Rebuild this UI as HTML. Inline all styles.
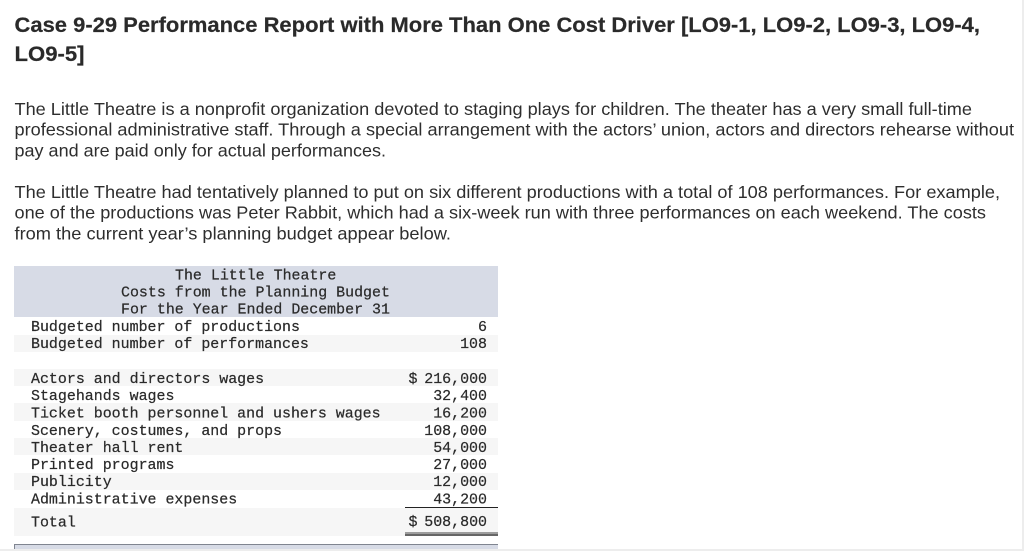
<!DOCTYPE html>
<html><head><meta charset="utf-8"><style>
html,body{margin:0;padding:0;background:#fff;width:1024px;height:553px;overflow:hidden}
svg{display:block}
.h{font:bold 21.5px "Liberation Sans",sans-serif;fill:#2a2a2a;stroke:#2a2a2a;stroke-width:.2}
.b{font:17.6px "Liberation Sans",sans-serif;fill:#2e2e2e}
.m{font:14.95px "Liberation Mono",monospace;fill:#2a2a2a;stroke:#2a2a2a;stroke-width:.22}
.r{text-anchor:end}
</style></head><body>
<svg width="1024" height="553" viewBox="0 0 1024 553" xmlns="http://www.w3.org/2000/svg">
<rect x="1022" y="0" width="2" height="551" fill="#ededed"/>
<rect x="0" y="549" width="1024" height="2" fill="#ededed"/>
<text class="h" x="14.5" y="32" textLength="965.5" lengthAdjust="spacingAndGlyphs">Case 9-29 Performance Report with More Than One Cost Driver [LO9-1, LO9-2, LO9-3, LO9-4,</text>
<text class="h" x="14.5" y="61" textLength="70" lengthAdjust="spacingAndGlyphs">LO9-5]</text>
<text class="b" x="14.5" y="115" textLength="957.5" lengthAdjust="spacingAndGlyphs">The Little Theatre is a nonprofit organization devoted to staging plays for children. The theater has a very small full-time</text>
<text class="b" x="14.5" y="135.6" textLength="999.5" lengthAdjust="spacingAndGlyphs">professional administrative staff. Through a special arrangement with the actors’ union, actors and directors rehearse without</text>
<text class="b" x="14.5" y="156.4" textLength="371.5" lengthAdjust="spacingAndGlyphs">pay and are paid only for actual performances.</text>
<text class="b" x="14.5" y="198" textLength="985.5" lengthAdjust="spacingAndGlyphs">The Little Theatre had tentatively planned to put on six different productions with a total of 108 performances. For example,</text>
<text class="b" x="14.5" y="218.6" textLength="971.5" lengthAdjust="spacingAndGlyphs">one of the productions was Peter Rabbit, which had a six-week run with three performances on each weekend. The costs</text>
<text class="b" x="14.5" y="239.4" textLength="436.5" lengthAdjust="spacingAndGlyphs">from the current year’s planning budget appear below.</text>

<rect x="14" y="266" width="484" height="51" fill="#d7dbe6"/>
<rect x="14" y="335" width="484" height="17" fill="#f6f6f6"/>
<rect x="14" y="369" width="484" height="17" fill="#f6f6f6"/>
<rect x="14" y="403" width="484" height="18" fill="#f6f6f6"/>
<rect x="14" y="438" width="484" height="17" fill="#f6f6f6"/>
<rect x="14" y="473" width="484" height="17" fill="#f6f6f6"/>
<rect x="14" y="508" width="484" height="28" fill="#f6f6f6"/>
<rect x="405" y="507" width="93" height="1" fill="#222"/>
<rect x="405" y="532.5" width="93" height="1" fill="#444"/>
<rect x="405" y="534" width="93" height="2" fill="#666"/>
<rect x="14" y="544" width="484" height="5" fill="#d7dbe6"/>
<rect x="14" y="544" width="484" height="1" fill="#808590"/>
<rect x="14" y="544" width="1" height="5" fill="#808590"/>

<text class="m" x="175" y="279.5">The Little Theatre</text>
<text class="m" x="121" y="296.5">Costs from the Planning Budget</text>
<text class="m" x="121" y="313.5">For the Year Ended December 31</text>
<text class="m" x="31" y="331">Budgeted number of productions</text>
<text class="m" x="31" y="348.2">Budgeted number of performances</text>
<text class="m" x="31" y="383">Actors and directors wages</text>
<text class="m" x="31" y="400">Stagehands wages</text>
<text class="m" x="31" y="417.4">Ticket booth personnel and ushers wages</text>
<text class="m" x="31" y="435">Scenery, costumes, and props</text>
<text class="m" x="31" y="452">Theater hall rent</text>
<text class="m" x="31" y="469">Printed programs</text>
<text class="m" x="31" y="486">Publicity</text>
<text class="m" x="31" y="503.4">Administrative expenses</text>
<text class="m" x="31" y="526.4">Total</text>

<text class="m r" x="487" y="331">6</text>
<text class="m r" x="487" y="348.2">108</text>
<text class="m" x="408.5" y="383">$</text>
<text class="m r" x="487" y="383">216,000</text>
<text class="m r" x="487" y="400">32,400</text>
<text class="m r" x="487" y="417.4">16,200</text>
<text class="m r" x="487" y="435">108,000</text>
<text class="m r" x="487" y="452">54,000</text>
<text class="m r" x="487" y="469">27,000</text>
<text class="m r" x="487" y="486">12,000</text>
<text class="m r" x="487" y="503.4">43,200</text>
<text class="m" x="408.5" y="526">$</text>
<text class="m r" x="487" y="526">508,800</text>
</svg>
</body></html>
